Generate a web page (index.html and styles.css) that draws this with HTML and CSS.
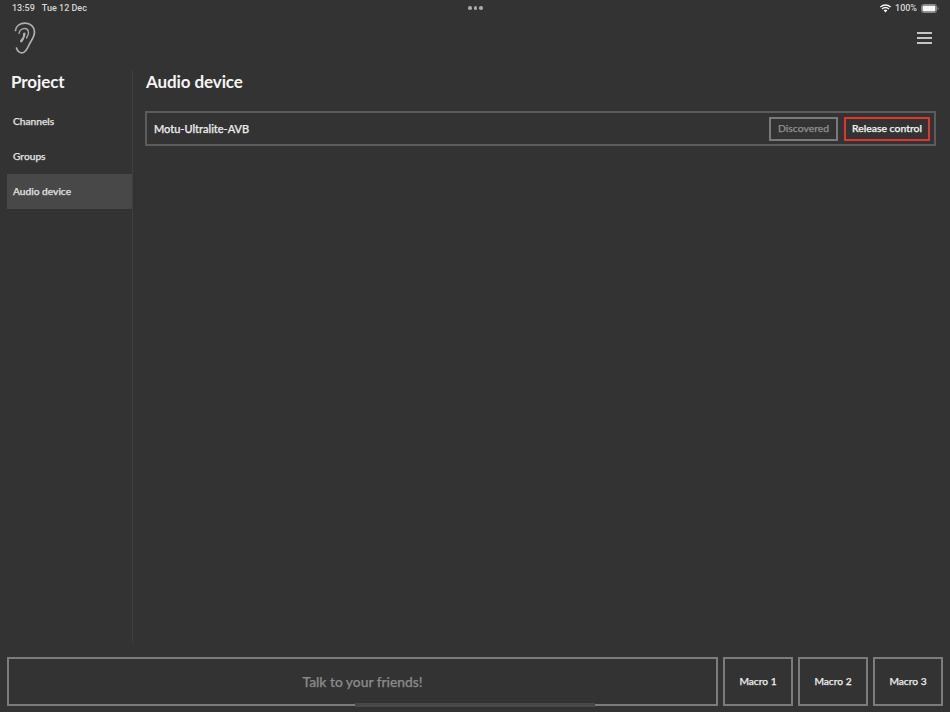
FILE: index.html
```html
<!DOCTYPE html>
<html lang="en">
<head>
<meta charset="utf-8">
<title>Audio device</title>
<link rel="stylesheet" href="styles.css">
</head>
<body>
<div class="app">
  <div class="statusbar">
    <div class="status-left"><span>13:59</span><span>Tue 12 Dec</span></div>
    <div class="dots"><i></i><i></i><i></i></div>
    <div class="status-right">
      <svg class="wifi" width="11" height="9" viewBox="0 0 11 9"><path d="M.4 3.100a7.200 7.200 0 0 1 10.200 0" fill="none" stroke="#f4f4f4" stroke-width="1.400"/><path d="M2.100 4.900a4.800 4.800 0 0 1 6.800 0" fill="none" stroke="#f4f4f4" stroke-width="1.400"/><path d="M3.700 6.400a2.600 2.600 0 0 1 3.600 0L5.500 8.600z" fill="#f4f4f4"/></svg>
      <span>100%</span>
      <svg class="battery" width="18" height="9" viewBox="0 0 18 9"><rect x=".5" y=".5" width="15" height="8" rx="2" fill="none" stroke="#8a8a8a"/><rect x="1.500" y="1.500" width="13" height="6" rx="1" fill="#f6f6f6"/><path d="M16.500 3v3a1.600 1.600 0 0 0 0-3z" fill="#8a8a8a"/></svg>
    </div>
  </div>
  <header class="topbar">
    <svg class="ear" width="24" height="34" viewBox="0 0 24 34"><path d="M2.500 9.500C3 5 7 2.200 12 2.200c5.500 0 9.500 3.800 9.500 8.800 0 4.500-2.500 7.500-4.500 11-2 3.500-3 8-6.500 9.500-3 1-6-.5-7-4.500" fill="none" stroke="#b0b0b0" stroke-width="1.700" stroke-linecap="round"/><path d="M6 12.500C6.500 9.500 9 7.500 11.500 7.500c2.500 0 4 2 4 4.500 0 2-1 3.500-2 5" fill="none" stroke="#a8a8a8" stroke-width="1.400" stroke-linecap="round"/><path d="M11 11.500c1.800 0 1.800 1.800 1.300 3-1 2.500-1.800 6-3.800 7-1.300 0-1.800-1-1.300-2.300 1-1.500 2.800-3 2.800-4.500 0-1.300-.3-2.400 1-3.200z" fill="#b0b0b0"/></svg>
    <button class="menu" aria-label="Menu"><i></i><i></i><i></i></button>
  </header>
  <main class="main">
    <nav class="sidebar">
      <h2 class="title side-title">Project</h2>
      <a class="nav-item">Channels</a>
      <a class="nav-item">Groups</a>
      <a class="nav-item active">Audio device</a>
    </nav>
    <section class="content">
      <h2 class="title content-title">Audio device</h2>
      <div class="device">
        <span class="device-name">Motu-Ultralite-AVB</span>
        <span class="btn muted">Discovered</span>
        <span class="btn danger">Release control</span>
      </div>
    </section>
  </main>
  <footer class="footer">
    <div class="talk">Talk to your friends!</div>
    <div class="macro">Macro 1</div>
    <div class="macro">Macro 2</div>
    <div class="macro">Macro 3</div>
  </footer>
  <div class="home"></div>
</div>
</body>
</html>
```
FILE: styles.css
```css
* { box-sizing: border-box; }
html, body { margin: 0; height: 100%; }
body {
  background: #333333;
  color: #f2f2f2;
  font-family: Lato, "Open Sans", "Liberation Sans", sans-serif;
  overflow: hidden;
}
.app {
  position: relative;
  width: 950px;
  height: 712px;
  display: flex;
  flex-direction: column;
}
.statusbar {
  height: 16px;
  padding: 0 11px 0 12px;
  display: grid;
  grid-template-columns: 1fr auto 1fr;
  align-items: center;
  font-family: Roboto, "Liberation Sans", sans-serif;
  font-size: 9px;
  font-weight: 500;
  color: #d6d6d6;
}
.status-left { display: flex; gap: 7px; }
.dots { display: flex; gap: 2px; }
.dots i { width: 3.500px; height: 3.500px; border-radius: 50%; background: #a8a8a8; }
.status-right { display: flex; justify-content: flex-end; align-items: center; gap: 4px; }
.topbar {
  height: 44px;
  padding: 5px 18px 0 13px;
  display: flex;
  justify-content: space-between;
  align-items: flex-start;
}
.menu {
  margin-top: 11px;
  width: 15px;
  padding: 0;
  background: none;
  border: 0;
  display: flex;
  flex-direction: column;
  gap: 3px;
}
.menu i { display: block; height: 2px; background: #c4c4c4; }
.main {
  flex: 1;
  display: flex;
  padding: 10px 14px 14px 7px;
  min-height: 0;
}
.sidebar {
  width: 126px;
  flex: none;
  border-right: 1px solid #3f3f3f;
}
.title {
  margin: 0;
  height: 24px;
  font-size: 17px;
  line-height: 24px;
  font-weight: 700;
  letter-spacing: -0.1px;
  color: #f5f5f5;
}
.side-title { padding-left: 4px; margin-bottom: 10px; }
.content-title { padding-left: 1px; }
.nav-item {
  display: flex;
  align-items: center;
  height: 35px;
  width: 125px;
  padding: 0 0 1px 6px;
  font-size: 10.200px;
  font-weight: 500;
  -webkit-text-stroke: 0.25px;
  color: #e2e2e2;
}
.active { background: #484848; }
.content {
  flex: 1;
  padding-left: 12px;
  min-width: 0;
}
.device {
  margin-top: 17px;
  height: 35px;
  border: 2px solid #5c5c5c;
  display: flex;
  align-items: center;
  gap: 6px;
  padding: 0 4px 0 7px;
}
.device-name {
  margin-right: auto;
  font-size: 11px;
  font-weight: 500;
  -webkit-text-stroke: 0.25px;
  color: #ececec;
}
.btn {
  height: 24px;
  display: flex;
  align-items: center;
  justify-content: center;
  padding-bottom: 1px;
  font-size: 10.400px;
  font-weight: 500;
  -webkit-text-stroke: 0.25px;
  border: 2px solid;
}
.muted { width: 69px; border-color: #7a7a7a; color: #8e8e8e; }
.danger { width: 86px; border-color: #e2352f; color: #f5f5f5; }
.footer {
  height: 49px;
  margin: 0 7px 6px;
  display: flex;
  gap: 5px;
}
.talk, .macro {
  border: 2px solid #7c7c7c;
  display: flex;
  align-items: center;
  justify-content: center;
  padding-bottom: 1px;
}
.talk {
  flex: 1;
  font-size: 13.800px;
  font-weight: 500;
  -webkit-text-stroke: 0.25px;
  color: #8a8a8a;
}
.macro {
  width: 70px;
  flex: none;
  font-size: 10.200px;
  font-weight: 500;
  -webkit-text-stroke: 0.25px;
  color: #ececec;
}
.home {
  position: absolute;
  left: 355px;
  top: 703px;
  width: 240px;
  height: 4px;
  background: #484848;
}
```
